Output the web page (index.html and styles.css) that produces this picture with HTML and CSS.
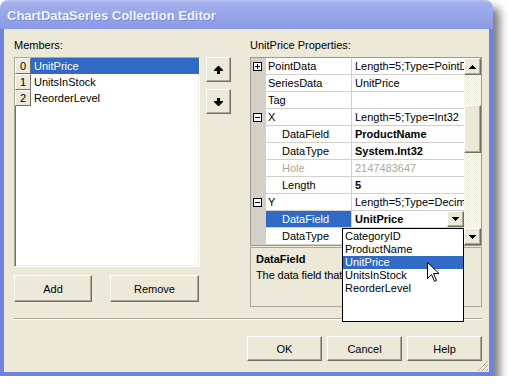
FILE: index.html
```html
<!DOCTYPE html>
<html>
<head>
    <title>ChartDataSeries Collection Editor</title>
    <meta charset="UTF-8">
    <link rel="stylesheet" href="styles.css">
</head>
<body>
    <div class="window">
        <div class="titlebar">ChartDataSeries Collection Editor</div>
        <div class="client">
            <div class="main">
                <div class="members">
                    <div class="caption">Members:</div>
                    <div class="members-row">
                        <div class="listbox">
                            <div class="item selected"><span class="index">0</span><span class="item-text">UnitPrice</span></div>
                            <div class="item"><span class="index">1</span><span class="item-text">UnitsInStock</span></div>
                            <div class="item"><span class="index">2</span><span class="item-text">ReorderLevel</span></div>
                        </div>
                        <div class="order-buttons">
                            <button class="btn arrow-btn">
                                <svg width="9" height="8" viewBox="0 0 9 8"><path d="M4 0h1l4 4v1H6v3H3V5H0V4z" fill="#000"/></svg>
                            </button>
                            <button class="btn arrow-btn">
                                <svg width="9" height="8" viewBox="0 0 9 8"><path d="M3 0h3v3h3v1L5 8H4L0 4V3h3z" fill="#000"/></svg>
                            </button>
                        </div>
                    </div>
                    <div class="members-buttons">
                        <button class="btn add-btn">Add</button>
                        <button class="btn remove-btn">Remove</button>
                    </div>
                </div>

                <div class="properties">
                    <div class="caption">UnitPrice Properties:</div>
                    <div class="grid">
                        <div class="grid-rows">
                            <div class="row">
                                <div class="margin"><svg width="9" height="9"><rect x="0.5" y="0.5" width="8" height="8" fill="#fff" stroke="#000"/><path d="M2 4.5h5M4.5 2v5" stroke="#000"/></svg></div>
                                <div class="name">PointData</div>
                                <div class="value">Length=5;Type=PointD[]</div>
                            </div>
                            <div class="row">
                                <div class="margin"></div>
                                <div class="name">SeriesData</div>
                                <div class="value">UnitPrice</div>
                            </div>
                            <div class="row">
                                <div class="margin"></div>
                                <div class="name">Tag</div>
                                <div class="value"></div>
                            </div>
                            <div class="row">
                                <div class="margin"><svg width="9" height="9"><rect x="0.5" y="0.5" width="8" height="8" fill="#fff" stroke="#000"/><path d="M2 4.5h5" stroke="#000"/></svg></div>
                                <div class="name">X</div>
                                <div class="value">Length=5;Type=Int32</div>
                            </div>
                            <div class="row">
                                <div class="margin"></div>
                                <div class="name child">DataField</div>
                                <div class="value bold">ProductName</div>
                            </div>
                            <div class="row">
                                <div class="margin"></div>
                                <div class="name child">DataType</div>
                                <div class="value bold">System.Int32</div>
                            </div>
                            <div class="row disabled">
                                <div class="margin"></div>
                                <div class="name child">Hole</div>
                                <div class="value">2147483647</div>
                            </div>
                            <div class="row">
                                <div class="margin"></div>
                                <div class="name child">Length</div>
                                <div class="value bold">5</div>
                            </div>
                            <div class="row">
                                <div class="margin"><svg width="9" height="9"><rect x="0.5" y="0.5" width="8" height="8" fill="#fff" stroke="#000"/><path d="M2 4.5h5" stroke="#000"/></svg></div>
                                <div class="name">Y</div>
                                <div class="value">Length=5;Type=Decimal</div>
                            </div>
                            <div class="row">
                                <div class="margin"></div>
                                <div class="name child selected">DataField</div>
                                <div class="value bold with-button">
                                    <span class="value-text">UnitPrice</span>
                                    <span class="btn drop-btn"><svg width="7" height="4"><path d="M0 0h7v1H6v1H5v1H4v1H3V3H2V2H1V1H0z" fill="#000"/></svg></span>
                                </div>
                            </div>
                            <div class="row">
                                <div class="margin"></div>
                                <div class="name child">DataType</div>
                                <div class="value"></div>
                            </div>
                        </div>
                        <div class="scrollbar">
                            <div class="btn sb-btn"><svg width="7" height="4"><path d="M3 0h1v1h1v1h1v1h1v1H0V3h1V2h1V1h1z" fill="#000"/></svg></div>
                            <div class="sb-track"><div class="btn sb-thumb"></div></div>
                            <div class="btn sb-btn"><svg width="7" height="4"><path d="M0 0h7v1H6v1H5v1H4v1H3V3H2V2H1V1H0z" fill="#000"/></svg></div>
                        </div>
                    </div>
                    <div class="description">
                        <div class="desc-title">DataField</div>
                        <div class="desc-text">The data field that</div>
                    </div>
                </div>
            </div>

            <div class="separator"></div>

            <div class="footer">
                <button class="btn dialog-btn">OK</button>
                <button class="btn dialog-btn">Cancel</button>
                <button class="btn dialog-btn">Help</button>
            </div>
        </div>

        <div class="dropdown">
            <div class="dropdown-item">CategoryID</div>
            <div class="dropdown-item">ProductName</div>
            <div class="dropdown-item selected">UnitPrice</div>
            <div class="dropdown-item">UnitsInStock</div>
            <div class="dropdown-item">ReorderLevel</div>
        </div>

        <svg class="cursor" width="13" height="21" viewBox="0 0 13 21">
            <path d="M0.5 0.5V16.5L4.5 12.5L7.5 19.5L9.5 18.5L6.5 11.5H12Z" fill="#fff" stroke="#000" stroke-linejoin="miter"/>
        </svg>

        <svg class="grip" width="12" height="12" viewBox="0 0 12 12">
            <path d="M11 1L1 11M11 5L5 11M11 9L9 11" stroke="#aca899" stroke-width="1"/>
            <path d="M12 1L2 11M12 5L6 11M12 9L10 11" stroke="#fff" stroke-width="1"/>
        </svg>
    </div>
</body>
</html>
```

FILE: styles.css
```css
body {
    margin: 0;
    background-color: #fff;
    font-family: "Liberation Sans", Arial, sans-serif;
    font-size: 11px;
    color: #000;
}

.window {
    position: relative;
    width: 493px;
    height: 376px;
    display: flex;
    flex-direction: column;
    border-radius: 8px 8px 0 0;
    box-shadow: 7px 7px 9px rgba(0, 0, 0, 0.5);
}

.titlebar {
    height: 29px;
    box-sizing: border-box;
    padding: 3px 0 0 7px;
    line-height: 26px;
    border-radius: 8px 8px 0 0;
    background: linear-gradient(to bottom, #b6c1f3 0%, #a2afed 12%, #96a5e9 55%, #8a9ae5 100%);
    color: #f2f4ff;
    font-size: 13px;
    font-weight: bold;
    text-shadow: 1px 1px 0 rgba(60, 80, 170, 0.35);
    white-space: nowrap;
}

.client {
    flex: 1;
    background-color: #ece9d8;
    border: 4px solid #6f82df;
    border-top: none;
    padding: 10px 7px 0 10px;
}

.main {
    display: flex;
    gap: 19px;
}

.caption {
    height: 13px;
    line-height: 13px;
    margin-bottom: 5px;
    white-space: nowrap;
}

/* members side */

.members {
    width: 217px;
}

.members-row {
    display: flex;
    gap: 6px;
}

.listbox {
    width: 186px;
    height: 210px;
    box-sizing: border-box;
    background-color: #fff;
    border: 1px solid;
    border-color: #aca899 #fff #fff #aca899;
    box-shadow: inset 1px 1px 0 #716f64, inset -1px -1px 0 #f1efe2;
}

.item {
    display: flex;
    height: 16px;
    line-height: 16px;
}

.index {
    width: 16px;
    box-sizing: border-box;
    text-align: center;
    background-color: #ece9d8;
    border: 1px solid;
    border-color: #fff #716f64 #716f64 #fff;
    line-height: 14px;
}

.item-text {
    flex: 1;
    padding-left: 3px;
}

.item.selected .item-text {
    background-color: #316ac5;
    color: #fff;
}

.btn {
    font-family: "Liberation Sans", Arial, sans-serif;
    font-size: 11px;
    color: #000;
    background-color: #ece9d8;
    border: 1px solid;
    border-color: #fff #716f64 #716f64 #fff;
    box-shadow: inset -1px -1px 0 #aca899;
    box-sizing: border-box;
    padding: 0;
    margin: 0;
}

.order-buttons {
    display: flex;
    flex-direction: column;
    gap: 7px;
}

.arrow-btn {
    width: 25px;
    height: 25px;
    display: flex;
    align-items: center;
    justify-content: center;
}

.members-buttons {
    display: flex;
    gap: 18px;
    margin-top: 8px;
}

.add-btn {
    width: 78px;
    height: 27px;
}

.remove-btn {
    width: 89px;
    height: 27px;
}

/* property grid */

.properties {
    width: 232px;
}

.grid {
    display: flex;
    height: 189px;
    box-sizing: border-box;
    border: 1px solid #9d9a8c;
    background-color: #fff;
}

.grid-rows {
    flex: 1;
    overflow: hidden;
}

.row {
    display: flex;
    height: 17px;
}

.margin {
    width: 15px;
    background-color: #d4d0c8;
    display: flex;
    align-items: center;
    padding: 0 0 1px 2px;
    box-sizing: border-box;
}

.name {
    width: 86px;
    box-sizing: border-box;
    padding: 1px 0 0 2px;
    line-height: 15px;
    border-right: 1px solid #d4d0c8;
    border-bottom: 1px solid #d4d0c8;
    white-space: nowrap;
    overflow: hidden;
}

.name.child {
    padding-left: 16px;
}

.name.selected {
    background-color: #316ac5;
    color: #fff;
}

.value {
    flex: 1;
    min-width: 0;
    padding: 1px 0 0 3px;
    line-height: 15px;
    border-bottom: 1px solid #d4d0c8;
    white-space: nowrap;
    overflow: hidden;
}

.bold {
    font-weight: bold;
}

.disabled .name,
.disabled .value {
    color: #aca899;
}

.value.with-button {
    display: flex;
    padding-top: 0;
}

.value-text {
    flex: 1;
    padding-top: 1px;
}

.drop-btn {
    width: 17px;
    height: 16px;
    display: flex;
    align-items: center;
    justify-content: center;
}

.scrollbar {
    width: 17px;
    display: flex;
    flex-direction: column;
}

.sb-btn {
    height: 17px;
    display: flex;
    align-items: center;
    justify-content: center;
}

.sb-track {
    flex: 1;
    background: repeating-conic-gradient(#ece9d8 0% 25%, #fff 0% 50%) 0 0 / 2px 2px;
}

.sb-thumb {
    margin-top: 30px;
    height: 48px;
}

.description {
    margin-top: 1px;
    height: 60px;
    box-sizing: border-box;
    border: 1px solid #aca899;
    padding: 5px 0 0 5px;
    overflow: hidden;
}

.desc-title {
    font-weight: bold;
    line-height: 13px;
}

.desc-text {
    margin-top: 3px;
    line-height: 13px;
    white-space: nowrap;
    letter-spacing: -0.1px;
}

/* bottom */

.separator {
    margin-top: 11px;
    height: 0;
    border-top: 1px solid #aca899;
    border-bottom: 1px solid #fff;
}

.footer {
    display: flex;
    justify-content: flex-end;
    gap: 5px;
    margin-top: 16px;
}

.dialog-btn {
    width: 75px;
    height: 25px;
}

/* overlays */

.dropdown {
    position: absolute;
    left: 342px;
    top: 228px;
    width: 122px;
    height: 94px;
    box-sizing: border-box;
    border: 1px solid #000;
    background-color: #fff;
    padding-top: 1px;
}

.dropdown-item {
    height: 13px;
    line-height: 13px;
    padding-left: 2px;
    white-space: nowrap;
}

.dropdown-item.selected {
    background-color: #316ac5;
    color: #fff;
}

.cursor {
    position: absolute;
    left: 427px;
    top: 262px;
}

.grip {
    position: absolute;
    right: 4px;
    bottom: 4px;
}
```
